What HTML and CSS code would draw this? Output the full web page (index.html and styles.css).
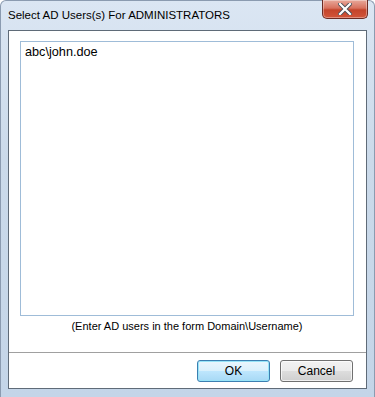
FILE: index.html
```html
<!DOCTYPE html>
<html lang="en">
<head>
    <meta charset="UTF-8">
    <meta name="viewport" content="width=device-width, initial-scale=1.0">
    <title>Select AD Users</title>
    <link rel="stylesheet" href="styles.css">
</head>
<body>
    <div class="window">
        <div class="titlebar">
            <span class="title">Select AD Users(s) For ADMINISTRATORS</span>
            <button class="close-btn" aria-label="Close">
                <svg width="14" height="12" viewBox="0 0 14 12">
                    <path d="M2 1 L12 11 M12 1 L2 11" stroke="#4a4f58" stroke-width="4" stroke-linecap="square"/>
                    <path d="M2 1 L12 11 M12 1 L2 11" stroke="#ffffff" stroke-width="2.2" stroke-linecap="square"/>
                </svg>
            </button>
        </div>

        <div class="client">
            <div class="content">
                <div class="user-list">abc\john.doe</div>
                <p class="hint">(Enter AD users in the form Domain\Username)</p>
            </div>
            <div class="footer">
                <button class="btn btn-default">OK</button>
                <button class="btn">Cancel</button>
            </div>
        </div>
    </div>
</body>
</html>
```

FILE: styles.css
```css
body {
    margin: 0;
    background-color: #ffffff;
    font-family: "Liberation Sans", Arial, sans-serif;
}

.window {
    width: 375px;
    height: 397px;
    box-sizing: border-box;
    padding: 0 7px 8px 7px;
    display: flex;
    flex-direction: column;
    background: linear-gradient(to bottom, #dbe6f3 0%, #cbdaea 40%, #c4d5e8 100%);
    border-radius: 6px 6px 0 0;
    border: 1px solid #8b9bb0;
    border-bottom: none;
}

.titlebar {
    height: 29px;
    display: flex;
    align-items: flex-start;
    justify-content: space-between;
    margin-right: -1px;
}

.title {
    font-size: 11.5px;
    color: #000;
    margin-top: 8px;
    margin-left: 0;
}

.close-btn {
    width: 46px;
    height: 19px;
    margin-top: -1px;
    padding: 0;
    border: 1px solid #6b2b24;
    border-top: none;
    border-radius: 0 0 5px 5px;
    background: linear-gradient(to bottom, #e8a99b 0%, #d8715e 45%, #c4442b 55%, #d2553a 100%);
    box-shadow: inset 0 0 0 1px rgba(255,255,255,0.35);
    display: flex;
    align-items: center;
    justify-content: center;
}

.client {
    flex: 1;
    display: flex;
    flex-direction: column;
    background-color: #ffffff;
    border: 1px solid #5f6b78;
}

.content {
    flex: 1;
    padding: 10px 12px 0 11px;
    display: flex;
    flex-direction: column;
}

.user-list {
    height: 275px;
    box-sizing: border-box;
    border: 1px solid #9fbcd8;
    padding: 3px 4px;
    font-size: 12.7px;
    color: #000;
}

.hint {
    margin: 4px 0 0 0;
    text-align: center;
    font-size: 11px;
    color: #000;
}

.footer {
    height: 36px;
    border-top: 1px solid #a0a0a0;
    background-color: #ffffff;
    display: flex;
    justify-content: flex-end;
    align-items: flex-start;
    gap: 10px;
    padding: 7px 13px 0 0;
    box-sizing: border-box;
}

.btn {
    width: 73px;
    height: 22px;
    font-family: "Liberation Sans", Arial, sans-serif;
    font-size: 12px;
    color: #000;
    border: 1px solid #707070;
    border-radius: 3px;
    background: linear-gradient(to bottom, #f2f2f2 0%, #ebebeb 50%, #dddddd 51%, #cfcfcf 100%);
    box-shadow: inset 0 0 0 1px rgba(255,255,255,0.7);
    padding: 0;
}

.btn-default {
    border-color: #3c7fb1;
    background: linear-gradient(to bottom, #eaf6fd 0%, #d9f0fc 50%, #bee6fd 51%, #a7d9f5 100%);
    box-shadow: inset 0 0 0 1px #97e4f8;
}
```
